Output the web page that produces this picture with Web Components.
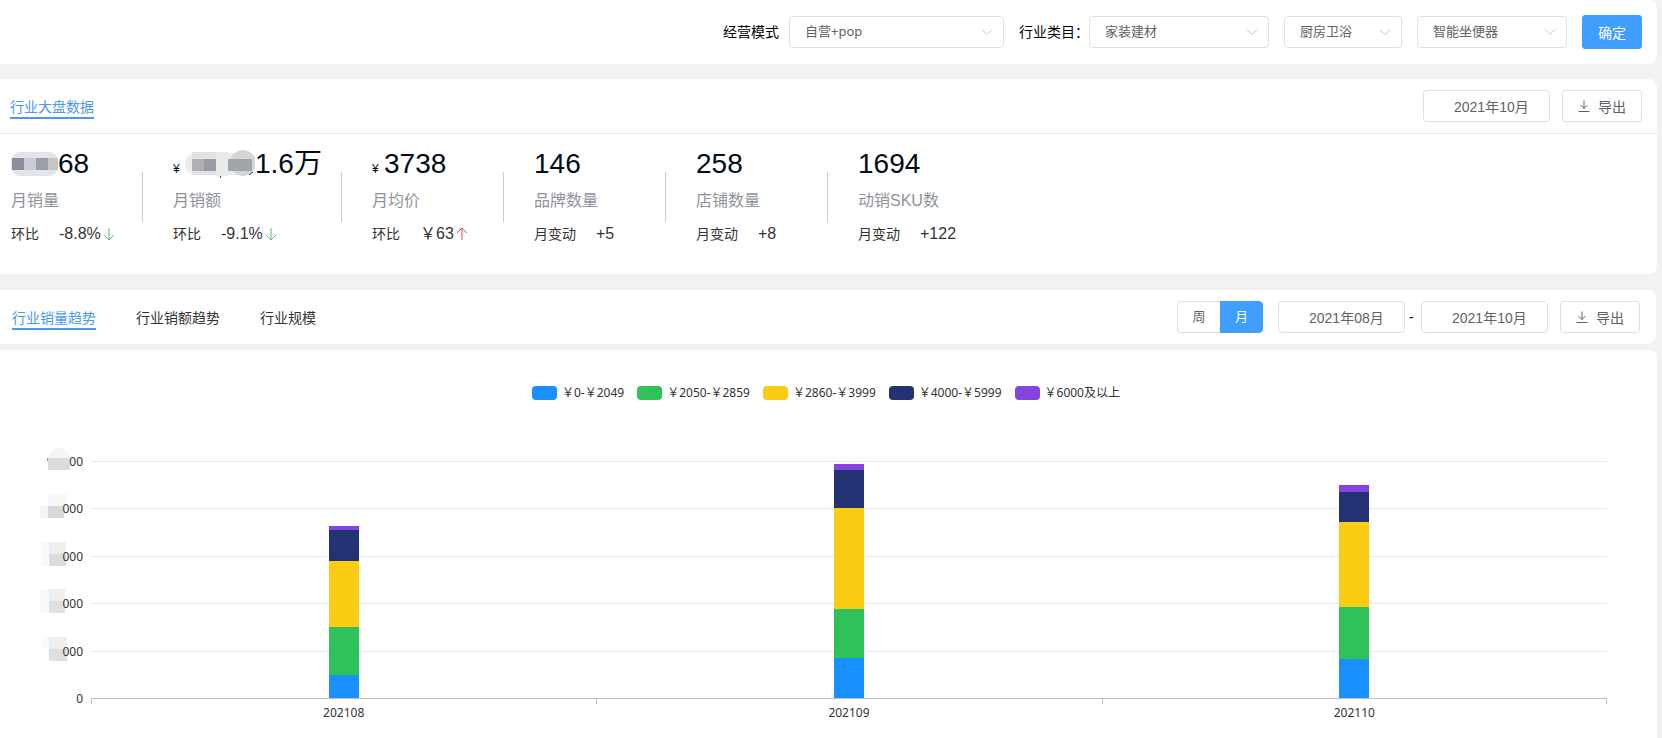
<!DOCTYPE html>
<html lang="zh-CN">
<head>
<meta charset="UTF-8">
<meta name="viewport" content="width=device-width, initial-scale=1.0">
<title>行业大盘</title>
<style>
    body {
        margin: 0;
        background: #f2f2f2;
        font-family: "Liberation Sans", "Noto Sans CJK SC", sans-serif;
        font-size: 14px;
        color: #333;
    }
</style>
</head>
<body>
<industry-page></industry-page>

<script>
    // white block the page is made of
    class PagePanel extends HTMLElement {
        constructor() {
            super();
            this.attachShadow({ mode: 'open' }).innerHTML = `
                <style>
                    :host {
                        display: block;
                        background: #fff;
                        border-radius: 0 8px 8px 0;
                        box-sizing: border-box;
                    }
                </style>
                <slot></slot>
            `;
        }
    }

    class FilterSelect extends HTMLElement {
        constructor() {
            super();
            const label = this.getAttribute('label');
            const text = this.getAttribute('value');
            this.attachShadow({ mode: 'open' }).innerHTML = `
                <style>
                    :host { display: flex; align-items: center; }
                    label { color: #000; line-height: 20px; white-space: nowrap; }
                    :host([spaced]) label { margin-right: 10px; }
                    .box { display: grid; align-items: center; width: var(--w, 180px); }
                    select, svg { grid-area: 1 / 1; }
                    select {
                        appearance: none;
                        width: 100%;
                        height: 32px;
                        padding: 0 30px 2px 15px;
                        border: 1px solid #dcdfe6;
                        border-radius: 4px;
                        background: #fff;
                        color: #606266;
                        font-family: "Noto Sans", "Noto Sans CJK SC", sans-serif;
                        font-size: 13px;
                    }
                    svg { justify-self: end; margin-right: 11px; pointer-events: none; }
                </style>
                ${label ? `<label for="s">${label}</label>` : ''}
                <div class="box">
                    <select id="s" aria-label="${label || text}"><option>${text}</option></select>
                    <svg width="12" height="12" viewBox="0 0 12 12" fill="none" stroke="#c0c4cc">
                        <path d="M1 3.5 6 8.500 11 3.500"/>
                    </svg>
                </div>
            `;
        }
    }

    class DateInput extends HTMLElement {
        constructor() {
            super();
            this.attachShadow({ mode: 'open' }).innerHTML = `
                <style>
                    :host { display: block; width: 127px; }
                    input {
                        display: block;
                        box-sizing: border-box;
                        width: 100%;
                        height: 32px;
                        padding: 0 10px 0 30px;
                        border: 1px solid #dcdfe6;
                        border-radius: 4px;
                        color: #606266;
                        font: inherit;
                    }
                </style>
                <input type="text" aria-label="月份" value="${this.getAttribute('value')}">
            `;
        }
    }

    class UiButton extends HTMLElement {
        constructor() {
            super();
            this.attachShadow({ mode: 'open' }).innerHTML = `
                <style>
                    :host { display: block; }
                    button {
                        display: flex;
                        align-items: center;
                        justify-content: center;
                        gap: 8px;
                        height: 32px;
                        padding: 0 15px;
                        border: 1px solid #dcdfe6;
                        border-radius: 3px;
                        background: #fff;
                        color: #606266;
                        font: inherit;
                        cursor: pointer;
                    }
                    :host([primary]) button {
                        height: 34px;
                        border-color: #409eff;
                        background: #409eff;
                        color: #fff;
                    }
                </style>
                <button type="button"><slot name="icon"></slot><slot></slot></button>
            `;
        }
    }

    class ExportButton extends HTMLElement {
        constructor() {
            super();
            this.attachShadow({ mode: 'open' }).innerHTML = `
                <style>:host { display: block; } svg { display: block; }</style>
                <ui-button>
                    <svg slot="icon" width="12" height="12" viewBox="0 0 12 12" fill="none" stroke="#606266">
                        <path d="M6 .5V8.500M2.500 5 6 8.500 9.500 5M.5 11.500H11.500"/>
                    </svg>导出</ui-button>
            `;
        }
    }

    class TabLink extends HTMLElement {
        constructor() {
            super();
            this.attachShadow({ mode: 'open' }).innerHTML = `
                <style>
                    :host { display: block; }
                    a {
                        display: block;
                        padding-top: 4px;
                        line-height: 20px;
                        border-bottom: 2px solid transparent;
                        color: #333;
                        text-decoration: none;
                    }
                    :host([active]) a { color: #4a9aec; border-color: #4a9aec; }
                </style>
                <a href="#"><slot></slot></a>
            `;
        }
    }

    class PeriodSwitch extends HTMLElement {
        constructor() {
            super();
            this.attachShadow({ mode: 'open' }).innerHTML = `
                <style>
                    :host { display: flex; font-size: 13px; }
                    input { position: absolute; opacity: 0; pointer-events: none; }
                    label {
                        box-sizing: border-box;
                        min-width: 43px;
                        text-align: center;
                        line-height: 30px;
                        border: 1px solid #dcdfe6;
                        color: #606266;
                        cursor: pointer;
                    }
                    .week { border-right: 0; border-radius: 4px 0 0 4px; }
                    .month { border-radius: 0 4px 4px 0; }
                    input:checked + label { background: #409eff; border-color: #409eff; color: #fff; }
                </style>
                <input type="radio" name="period" id="week"><label class="week" for="week">周</label>
                <input type="radio" name="period" id="month" checked><label class="month" for="month">月</label>
            `;
        }
    }

    class StatItem extends HTMLElement {
        constructor() {
            super();
            const trend = this.getAttribute('trend');
            const arrows = {
                down: '<svg width="12" height="14" viewBox="0 0 12 14" fill="none" stroke="#5fb87a"><path d="M6 1V13M1 8 6 13 11 8"/></svg>',
                up: '<svg width="12" height="14" viewBox="0 0 12 14" fill="none" stroke="#e0485c"><path d="M6 13V1M1 6 6 1 11 6"/></svg>'
            };
            this.attachShadow({ mode: 'open' }).innerHTML = `
                <style>
                    :host {
                        display: flex;
                        align-items: center;
                        min-width: 132px;
                        justify-content: space-between;
                    }
                    .value {
                        display: flex;
                        align-items: baseline;
                        height: 40px;
                        line-height: 40px;
                        font-size: 28px;
                        color: #000c17;
                        white-space: nowrap;
                    }
                    .unit { font-size: 12px; width: 12px; }
                    .name { margin-top: 5px; line-height: 24px; font-size: 16px; color: #909399; }
                    .change { display: flex; align-items: center; margin-top: 11px; line-height: 20px; white-space: nowrap; }
                    .change b { margin-left: 20px; font-size: 16px; font-weight: normal; }
                    .change svg { margin-left: 2px; }
                    .rule { width: 1px; height: 50px; margin-top: 6px; background: #ccc; }
                    :host([last]) .rule { display: none; }
                </style>
                <div>
                    <div class="value">${this.hasAttribute('money') ? '<span class="unit">¥</span>' : ''}<slot></slot></div>
                    <div class="name">${this.getAttribute('name')}</div>
                    <div class="change">${this.getAttribute('note')}<b>${this.getAttribute('change')}</b>${arrows[trend] || ''}</div>
                </div>
                <div class="rule"></div>
            `;
        }
    }

    const SERIES = [
        ['￥0-￥2049', '#1890ff'],
        ['￥2050-￥2859', '#2fc25b'],
        ['￥2860-￥3999', '#facc14'],
        ['￥4000-￥5999', '#223273'],
        ['￥6000及以上', '#8543e0']
    ];

    // heights of the segments, bottom to top, on a scale of 237
    const MONTHS = [
        ['202108', [23, 48, 66, 31, 4]],
        ['202109', [40, 49, 101, 38, 6]],
        ['202110', [39, 52, 85, 30, 7]]
    ];

    // axis labels: visible digits, then width, overlap and shapes of the patch before them
    const AXIS = [
        ['00', 24, -2, '<circle cx="12" cy="12" r="11" fill="#f5f5f5"/><path d="M1 11h22v12H1z" fill="#dcdcdc"/><path d="M.5 11v3" stroke="#999"/>'],
        ['000', 28, -5, '<path d="M9 0h19v12H9z" fill="#f8f8f8"/><path d="M1 12h8v12H1z" fill="#f5f5f5"/><path d="M9 12h16v12H9z" fill="#d8d8d8"/>'],
        ['000', 26, -4, '<path d="M1 0h8v24H1z" fill="#f9f9f9"/><path d="M9 0h17v12H9z" fill="#efefef"/><path d="M9 12h17v12H9z" fill="#dcdcdc"/>'],
        ['000', 26, -4, '<path d="M0 0h9v24H0z" fill="#f9f9f9"/><path d="M9 0h16v12H9z" fill="#efefef"/><path d="M9 12h16v12H9z" fill="#e0e0e0"/>'],
        ['000', 27, -5, '<path d="M2 0h7v12H2z" fill="#f9f9f9"/><path d="M9 0h18v12H9z" fill="#efefef"/><path d="M9 12h18v12H9z" fill="#dfdfdf"/>'],
        ['0', 0, 0, '']
    ];

    class StackChart extends HTMLElement {
        constructor() {
            super();
            const legend = SERIES.map(([name, color]) => `<li><i style="background:${color}"></i>${name}</li>`).join('');
            const axis = AXIS.map(([text, w, overlap, patch]) => `
                <div><span>${text}</span>${w ? `<svg width="${w}" height="24" style="margin-right:${overlap}px">${patch}</svg>` : ''}</div>`).join('');
            const bars = MONTHS.map(([, parts]) => `<div class="bar">${parts.map((p, i) =>
                `<i style="height:calc(100% * ${p} / 237);background:${SERIES[i][1]}"></i>`).join('')}</div>`).join('');
            const names = MONTHS.map(([name]) => `<div>${name}</div>`).join('');

            this.attachShadow({ mode: 'open' }).innerHTML = `
                <style>
                    :host {
                        display: block;
                        padding: 35px 50px 8px 0;
                        font-family: "Noto Sans", "Noto Sans CJK SC", sans-serif;
                        font-size: 12px;
                        line-height: 16px;
                    }
                    ul {
                        display: flex;
                        justify-content: center;
                        gap: 13px;
                        margin: 0 0 60px 45px;
                        padding: 0;
                        list-style: none;
                    }
                    li { display: flex; align-items: center; gap: 5px; white-space: nowrap; }
                    li i { width: 25px; height: 14px; border-radius: 4px; }
                    .chart { display: grid; grid-template-columns: 83px 1fr; column-gap: 8px; }
                    .axis {
                        display: flex;
                        flex-direction: column;
                        justify-content: space-between;
                        margin: -7px 0 -9px;
                    }
                    .axis div {
                        display: flex;
                        flex-direction: row-reverse;
                        align-items: center;
                        height: 16px;
                    }
                    .axis svg { flex: none; margin-bottom: 6px; }
                    .plot { display: grid; height: 237px; }
                    .lines, .bars { grid-area: 1 / 1; }
                    .lines { display: grid; grid-template-rows: repeat(5, 1fr); }
                    .lines div { border-top: 1px solid #e8e8e8; }
                    .bars { display: flex; min-height: 0; }
                    .bar {
                        flex: 1;
                        display: flex;
                        flex-direction: column-reverse;
                        align-items: center;
                    }
                    .bar i { width: 30px; flex: none; }
                    .names {
                        grid-column: 2;
                        display: flex;
                        border-top: 1px solid #bfbfbf;
                        text-align: center;
                    }
                    .names div { flex: 1; padding-top: 6px; background: linear-gradient(#bfbfbf, #bfbfbf) 0 0 / 1px 5px no-repeat; }
                    .names div:last-child {
                        background: linear-gradient(#bfbfbf, #bfbfbf) 0 0 / 1px 5px no-repeat,
                            linear-gradient(#bfbfbf, #bfbfbf) 100% 0 / 1px 5px no-repeat;
                    }
                </style>
                <ul>${legend}</ul>
                <div class="chart">
                    <div class="axis">${axis}</div>
                    <div class="plot">
                        <div class="lines"><div></div><div></div><div></div><div></div><div></div></div>
                        <div class="bars">${bars}</div>
                    </div>
                    <div class="names">${names}</div>
                </div>
            `;
        }
    }

    class IndustryPage extends HTMLElement {
        constructor() {
            super();
            this.attachShadow({ mode: 'open' }).innerHTML = `
                <style>
                    :host {
                        display: flex;
                        flex-direction: column;
                        min-height: 100vh;
                        box-sizing: border-box;
                        padding-right: 5px;
                    }
                    .filters {
                        display: flex;
                        align-items: center;
                        justify-content: flex-end;
                        gap: 15px;
                        height: 64px;
                        padding-right: 15px;
                    }
                    .overview { margin-top: 15px; }
                    .head { display: flex; align-items: center; height: 54px; padding: 0 15px 0 10px; }
                    .overview .head { border-bottom: 1px solid #e8e8e8; }
                    .tools { display: flex; align-items: center; gap: 12px; margin-left: auto; }
                    .stats { display: flex; gap: 30px; padding: 10px 10px 30px 11px; }
                    .stats svg { align-self: center; }
                    .wide { min-width: 169px; }
                    .trend { margin: 16px 1px 6px 0; }
                    .trend .head { padding-left: 12px; padding-right: 16px; }
                    .tabs { display: flex; gap: 40px; }
                    .range { display: flex; align-items: center; gap: 4px; margin-left: 3px; color: #000; }
                    .range span { width: 8px; }
                    .graph { flex: 1; border-radius: 0 8px 0 0; }
                </style>
                <page-panel>
                    <div class="filters">
                        <filter-select label="经营模式" value="自营+pop" spaced style="--w:215px"></filter-select>
                        <filter-select label="行业类目：" value="家装建材" style="--w:180px"></filter-select>
                        <filter-select value="厨房卫浴" style="--w:118px"></filter-select>
                        <filter-select value="智能坐便器" style="--w:150px"></filter-select>
                        <ui-button primary>确定</ui-button>
                    </div>
                </page-panel>

                <page-panel class="overview">
                    <div class="head">
                        <tab-link active>行业大盘数据</tab-link>
                        <div class="tools">
                            <date-input value="2021年10月"></date-input>
                            <export-button></export-button>
                        </div>
                    </div>
                    <div class="stats">
                        <stat-item name="月销量" note="环比" change="-8.8%" trend="down">
                            <svg width="47" height="26" viewBox="0 0 47 26">
                                <rect y="1" width="47" height="24" rx="9" fill="#e2e5e8"/>
                                <path d="M1 7h12v12H1z" fill="#8b8f9a"/>
                                <path d="M13 7h12v12H13z" fill="#c9cdd3"/>
                                <path d="M25 7h12v12H25z" fill="#9a9fa8"/>
                                <path d="M37 7h10v12H37z" fill="#c9c5c5"/>
                            </svg>68</stat-item>
                        <stat-item class="wide" money name="月销额" note="环比" change="-9.1%" trend="down">
                            <svg width="70" height="30" viewBox="0 0 70 30">
                                <rect x="0" y="4" width="66" height="22" rx="10" fill="#ececee"/>
                                <path d="M7 3h24v23H7z" fill="#e0e2e5"/>
                                <circle cx="58" cy="14" r="13" fill="#d2d6d7"/>
                                <path d="M7 10h12v12H7z" fill="#b3aeb6"/>
                                <path d="M19 10h12v12H19z" fill="#979ca7"/>
                                <path d="M31 3h12v24H31z" fill="#e9eaeb"/>
                                <path d="M43 10h24v12H43z" fill="#a0a6aa"/>
                                <path d="M36 27l-1 2M68 23l-4 3" stroke="#333"/>
                            </svg>1.6万</stat-item>
                        <stat-item money name="月均价" note="环比" change="￥63" trend="up">3738</stat-item>
                        <stat-item name="品牌数量" note="月变动" change="+5">146</stat-item>
                        <stat-item name="店铺数量" note="月变动" change="+8">258</stat-item>
                        <stat-item name="动销SKU数" note="月变动" change="+122" last>1694</stat-item>
                    </div>
                </page-panel>

                <page-panel class="trend">
                    <div class="head">
                        <div class="tabs">
                            <tab-link active>行业销量趋势</tab-link>
                            <tab-link>行业销额趋势</tab-link>
                            <tab-link>行业规模</tab-link>
                        </div>
                        <div class="tools">
                            <period-switch></period-switch>
                            <div class="range">
                                <date-input value="2021年08月"></date-input>
                                <span>-</span>
                                <date-input value="2021年10月"></date-input>
                            </div>
                            <export-button></export-button>
                        </div>
                    </div>
                </page-panel>

                <page-panel class="graph">
                    <stack-chart></stack-chart>
                </page-panel>
            `;
        }
    }

    customElements.define('page-panel', PagePanel);
    customElements.define('filter-select', FilterSelect);
    customElements.define('date-input', DateInput);
    customElements.define('ui-button', UiButton);
    customElements.define('export-button', ExportButton);
    customElements.define('tab-link', TabLink);
    customElements.define('period-switch', PeriodSwitch);
    customElements.define('stat-item', StatItem);
    customElements.define('stack-chart', StackChart);
    customElements.define('industry-page', IndustryPage);
</script>
</body>
</html>
